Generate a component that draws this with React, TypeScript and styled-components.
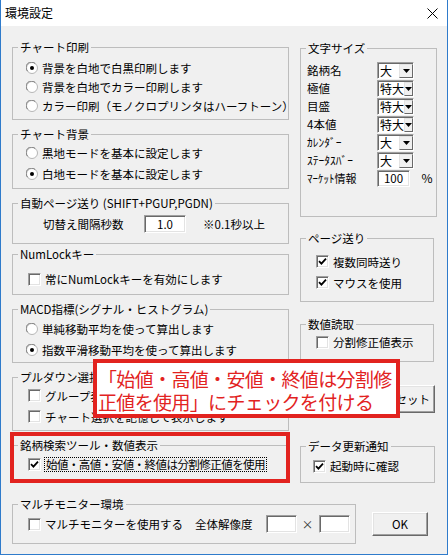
import styled, { createGlobalStyle } from 'styled-components';

const GlobalStyle = createGlobalStyle`
  html, body {
    margin: 0;
    padding: 0;
    background: #f0f0f0;
  }
  #root {
    width: 448px;
    height: 555px;
  }
`;

const Window = styled.div`
  width: 448px;
  height: 555px;
  box-sizing: border-box;
  border: 1px solid #2f7bcb;
  border-top: none;
  background: #f0f0f0;
  display: flex;
  flex-direction: column;
  font-family: 'Noto Sans CJK JP', 'Noto Sans', sans-serif;
  font-size: 11.5px;
  color: #000;
  overflow: hidden;
`;

const TitleBar = styled.div`
  height: 26px;
  flex: 0 0 auto;
  background: #fff;
  display: flex;
  align-items: center;
  justify-content: space-between;
  padding: 0 9px 0 4px;
`;

const WindowTitle = styled.div`
  font-size: 12px;
  line-height: 14px;
`;

const Body = styled.div`
  position: relative;
  flex: 1;
  padding: 14px 9px 0 11px;
  display: flex;
  flex-direction: column;
`;

const Columns = styled.div`
  display: flex;
  gap: 11px;
  align-items: flex-start;
`;

const LeftCol = styled.div`
  width: 277px;
  display: flex;
  flex-direction: column;
`;

const RightCol = styled.div`
  width: 137px;
  display: flex;
  flex-direction: column;
`;

const Group = styled.fieldset<{ $mt?: number; $pad: string; $w?: number }>`
  margin: ${(p) => p.$mt ?? 0}px 0 0;
  padding: ${(p) => p.$pad};
  border: 1px solid #bdbdbd;
  min-width: 0;
  box-sizing: border-box;
  ${(p) => (p.$w ? `width: ${p.$w}px;` : '')}
`;

const Legend = styled.legend`
  padding: 0 2px;
  margin-left: 5px;
  line-height: 14px;
  font-size: 11.5px;
  white-space: nowrap;
`;

const Row = styled.div<{ $h: number; $indent: number }>`
  height: ${(p) => p.$h}px;
  display: flex;
  align-items: center;
  gap: 4px;
  padding-left: ${(p) => p.$indent}px;
  white-space: nowrap;
`;

const Label = styled.span`
  line-height: 14px;
`;

const FocusLabel = styled.span`
  line-height: 13px;
  outline: 1px dotted #000;
  outline-offset: 0;
  padding: 0 1px;
  letter-spacing: -0.55px;
`;

const CheckBox = styled.span`
  width: 13px;
  height: 13px;
  flex: 0 0 auto;
  box-sizing: border-box;
  background: #fff;
  border-top: 1px solid #a0a0a0;
  border-left: 1px solid #a0a0a0;
  border-bottom: 1px solid #fff;
  border-right: 1px solid #fff;
  box-shadow: inset 1px 1px 0 #696969, inset -1px -1px 0 #e3e3e3;
  display: flex;
  align-items: center;
  justify-content: center;
`;

const TextBox = styled.div<{ $w: number; $h: number }>`
  width: ${(p) => p.$w}px;
  height: ${(p) => p.$h}px;
  box-sizing: border-box;
  background: #fff;
  border-top: 1px solid #a0a0a0;
  border-left: 1px solid #a0a0a0;
  border-bottom: 1px solid #fff;
  border-right: 1px solid #fff;
  box-shadow: inset 1px 1px 0 #696969, inset -1px -1px 0 #e3e3e3;
  display: flex;
  align-items: center;
  justify-content: center;
  padding: 0 4px;
  font-size: 11.5px;
  line-height: 14px;
  flex: 0 0 auto;
`;

const IntervalRow = styled.div`
  height: 22px;
  display: flex;
  align-items: center;
  padding-left: 30px;
  white-space: nowrap;
`;

const IntervalLabel = styled.span`
  width: 101px;
  line-height: 14px;
`;

const IntervalNote = styled.span`
  margin-left: 17px;
  line-height: 14px;
`;

const SizeRow = styled.div`
  height: 18px;
  display: grid;
  grid-template-columns: 70px auto auto;
  align-items: center;
  padding-left: 6px;
  white-space: nowrap;
`;

const SizeLabel = styled.span<{ $small?: boolean }>`
  font-size: ${(p) => (p.$small ? '11px' : '11.5px')};
  line-height: 14px;
`;

const Select = styled.div`
  width: 37px;
  height: 17px;
  box-sizing: border-box;
  display: flex;
  background: #fff;
  border-top: 1px solid #a0a0a0;
  border-left: 1px solid #a0a0a0;
  border-bottom: 1px solid #fff;
  border-right: 1px solid #fff;
  box-shadow: inset 1px 1px 0 #696969;
`;

const SelectValue = styled.span`
  flex: 1;
  padding: 1px 0 0 2px;
  font-size: 12px;
  line-height: 14px;
`;

const SelectButton = styled.span`
  width: 14px;
  height: 14px;
  margin: 1px 0 0 0;
  box-sizing: border-box;
  background: #f0f0f0;
  border-top: 1px solid #e3e3e3;
  border-left: 1px solid #e3e3e3;
  border-bottom: 1px solid #696969;
  border-right: 1px solid #696969;
  display: flex;
  align-items: center;
  justify-content: center;
`;

const Percent = styled.span`
  margin-left: 8px;
  font-size: 12px;
  line-height: 14px;
`;

const PushButton = styled.button<{ $w: number; $h: number }>`
  width: ${(p) => p.$w}px;
  height: ${(p) => p.$h}px;
  box-sizing: border-box;
  background: #f0f0f0;
  border-top: 1px solid #fff;
  border-left: 1px solid #fff;
  border-bottom: 1px solid #696969;
  border-right: 1px solid #696969;
  box-shadow: inset -1px -1px 0 #a0a0a0, inset 1px 1px 0 #e3e3e3;
  font-family: inherit;
  font-size: 11.5px;
  color: #000;
  padding: 0;
  flex: 0 0 auto;
`;

const ResetButton = styled(PushButton)`
  margin: 23px 2px 0 3px;
  align-self: stretch;
  width: auto;
  padding-left: 30px;
`;

const HighlightWrap = styled.div`
  position: relative;
  margin-top: 7px;
`;

const Highlight = styled.div`
  position: absolute;
  top: -6px;
  left: -2px;
  right: -1px;
  bottom: -3px;
  border: 4px solid #e2231f;
  pointer-events: none;
`;

const BottomRow = styled.div`
  display: flex;
  align-items: flex-start;
  margin-top: 14px;
`;

const MonitorRow = styled.div`
  height: 22px;
  display: flex;
  align-items: center;
  padding-left: 15px;
  white-space: nowrap;
`;

const MonitorText = styled.span`
  margin-left: 4px;
  line-height: 14px;
`;

const ResolutionLabel = styled.span`
  margin: 0 13px 0 12px;
  line-height: 14px;
`;

const Times = styled.span`
  width: 22px;
  text-align: center;
  line-height: 14px;
  color: #333;
`;

const OkButton = styled(PushButton)`
  margin: 15px 0 0 16px;
`;

const Annotation = styled.div`
  position: absolute;
  left: 92px;
  top: 333px;
  width: 307px;
  height: 59px;
  box-sizing: border-box;
  border: 4px solid #e2231f;
  background: #fff;
  color: #e2231f;
  font-size: 19px;
  line-height: 23px;
  padding: 4px 0 0 1px;
  white-space: nowrap;
  letter-spacing: -0.65px;
`;

function Radio({ checked }: { checked?: boolean }) {
  return (
    <svg width="12" height="12" viewBox="0 0 12 12" style={{ flex: '0 0 auto' }}>
      <circle cx="6" cy="6" r="5.5" fill="#fff" stroke="#b5b5b5" />
      <path d="M1.6 9.2 A5 5 0 0 1 9.2 1.6" fill="none" stroke="#7a7a7a" strokeWidth="1" />
      {checked && <circle cx="6" cy="6" r="2" fill="#000" />}
    </svg>
  );
}

function Check({ checked }: { checked?: boolean }) {
  return (
    <CheckBox>
      {checked && (
        <svg width="9" height="9" viewBox="0 0 9 9">
          <path d="M1 4.2 L3.4 6.6 L8 1.6" fill="none" stroke="#000" strokeWidth="1.8" />
        </svg>
      )}
    </CheckBox>
  );
}

function Arrow() {
  return (
    <svg width="7" height="4" viewBox="0 0 7 4">
      <path d="M0 0 H7 L3.5 4 Z" fill="#000" />
    </svg>
  );
}

function SizeSelect({ label, value, small }: { label: string; value: string; small?: boolean }) {
  return (
    <SizeRow>
      <SizeLabel $small={small}>{label}</SizeLabel>
      <Select>
        <SelectValue>{value}</SelectValue>
        <SelectButton>
          <Arrow />
        </SelectButton>
      </Select>
    </SizeRow>
  );
}

export default function App() {
  return (
    <>
      <GlobalStyle />
      <Window>
        <TitleBar>
          <WindowTitle>環境設定</WindowTitle>
          <svg width="11" height="11" viewBox="0 0 11 11">
            <path d="M0.5 0.5 L10.5 10.5 M10.5 0.5 L0.5 10.5" stroke="#000" strokeWidth="1" />
          </svg>
        </TitleBar>

        <Body>
          <Columns>
            <LeftCol>
              <Group $pad="4px 0 4px 0">
                <Legend>チャート印刷</Legend>
                <Row $h={19} $indent={13}>
                  <Radio checked />
                  <Label>背景を白地で白黒印刷します</Label>
                </Row>
                <Row $h={19} $indent={13}>
                  <Radio />
                  <Label>背景を白地でカラー印刷します</Label>
                </Row>
                <Row $h={19} $indent={13}>
                  <Radio />
                  <Label>カラー印刷（モノクロプリンタはハーフトーン）</Label>
                </Row>
              </Group>

              <Group $mt={7} $pad="1px 0 4px 0">
                <Legend>チャート背景</Legend>
                <Row $h={21} $indent={13}>
                  <Radio />
                  <Label>黒地モードを基本に設定します</Label>
                </Row>
                <Row $h={21} $indent={13}>
                  <Radio checked />
                  <Label>白地モードを基本に設定します</Label>
                </Row>
              </Group>

              <Group $mt={7} $pad="3px 0 8px 0">
                <Legend>自動ページ送り (SHIFT+PGUP,PGDN)</Legend>
                <IntervalRow>
                  <IntervalLabel>切替え間隔秒数</IntervalLabel>
                  <TextBox $w={42} $h={18}>1.0</TextBox>
                  <IntervalNote>※0.1秒以上</IntervalNote>
                </IntervalRow>
              </Group>

              <Group $mt={3} $pad="8px 0 5px 0">
                <Legend>NumLockキー</Legend>
                <Row $h={20} $indent={15}>
                  <Check />
                  <Label>常にNumLockキーを有効にします</Label>
                </Row>
              </Group>

              <Group $mt={7} $pad="2px 0 2px 0">
                <Legend>MACD指標(シグナル・ヒストグラム)</Legend>
                <Row $h={21} $indent={13}>
                  <Radio />
                  <Label>単純移動平均を使って算出します</Label>
                </Row>
                <Row $h={21} $indent={13}>
                  <Radio checked />
                  <Label>指数平滑移動平均を使って算出します</Label>
                </Row>
              </Group>

              <Group $mt={7} $pad="1px 0 3px 0">
                <Legend>プルダウン選択項目</Legend>
                <Row $h={21} $indent={15}>
                  <Check />
                  <Label>グループ表示を記憶します</Label>
                </Row>
                <Row $h={21} $indent={15}>
                  <Check />
                  <Label>チャート選択を記憶して表示します</Label>
                </Row>
              </Group>

              <HighlightWrap>
                <Group $pad="2px 0 5px 0">
                  <Legend>銘柄検索ツール・数値表示</Legend>
                  <Row $h={20} $indent={15}>
                    <Check checked />
                    <FocusLabel>始値・高値・安値・終値は分割修正値を使用</FocusLabel>
                  </Row>
                </Group>
                <Highlight />
              </HighlightWrap>
            </LeftCol>

            <RightCol>
              <Group $mt={1} $pad="6px 0 29px 0">
                <Legend>文字サイズ</Legend>
                <SizeSelect label="銘柄名" value="大" />
                <SizeSelect label="極値" value="特大" />
                <SizeSelect label="目盛" value="特大" />
                <SizeSelect label="4本値" value="特大" />
                <SizeSelect label="ｶﾚﾝﾀﾞｰ" value="大" />
                <SizeSelect label="ｽﾃｰﾀｽﾊﾞｰ" value="大" />
                <SizeRow>
                  <SizeLabel $small>ﾏｰｹｯﾄ情報</SizeLabel>
                  <TextBox $w={33} $h={17}>100</TextBox>
                  <Percent>%</Percent>
                </SizeRow>
              </Group>

              <Group $mt={14} $pad="6px 0 8px 0" $w={134}>
                <Legend>ページ送り</Legend>
                <Row $h={21} $indent={15}>
                  <Check checked />
                  <Label>複数同時送り</Label>
                </Row>
                <Row $h={21} $indent={15}>
                  <Check checked />
                  <Label>マウスを使用</Label>
                </Row>
              </Group>

              <Group $mt={15} $pad="1px 0 9px 0" $w={134}>
                <Legend>数値読取</Legend>
                <Row $h={20} $indent={15}>
                  <Check />
                  <Label>分割修正値表示</Label>
                </Row>
              </Group>

              <ResetButton type="button" $w={132} $h={28}>
                画面位置リセット
              </ResetButton>

              <Group $mt={26} $pad="3px 0 6px 0" $w={135}>
                <Legend>データ更新通知</Legend>
                <Row $h={20} $indent={12}>
                  <Check checked />
                  <Label>起動時に確認</Label>
                </Row>
              </Group>
            </RightCol>
          </Columns>

          <BottomRow>
            <Group $pad="2px 0 8px 0" $w={344}>
              <Legend>マルチモニター環境</Legend>
              <MonitorRow>
                <Check />
                <MonitorText>マルチモニターを使用する</MonitorText>
                <ResolutionLabel>全体解像度</ResolutionLabel>
                <TextBox $w={31} $h={18} />
                <Times>×</Times>
                <TextBox $w={31} $h={18} />
              </MonitorRow>
            </Group>
            <OkButton type="button" $w={56} $h={24}>
              OK
            </OkButton>
          </BottomRow>

          <Annotation>
            「始値・高値・安値・終値は分割修
            <br />
            正値を使用」にチェックを付ける
          </Annotation>
        </Body>
      </Window>
    </>
  );
}
